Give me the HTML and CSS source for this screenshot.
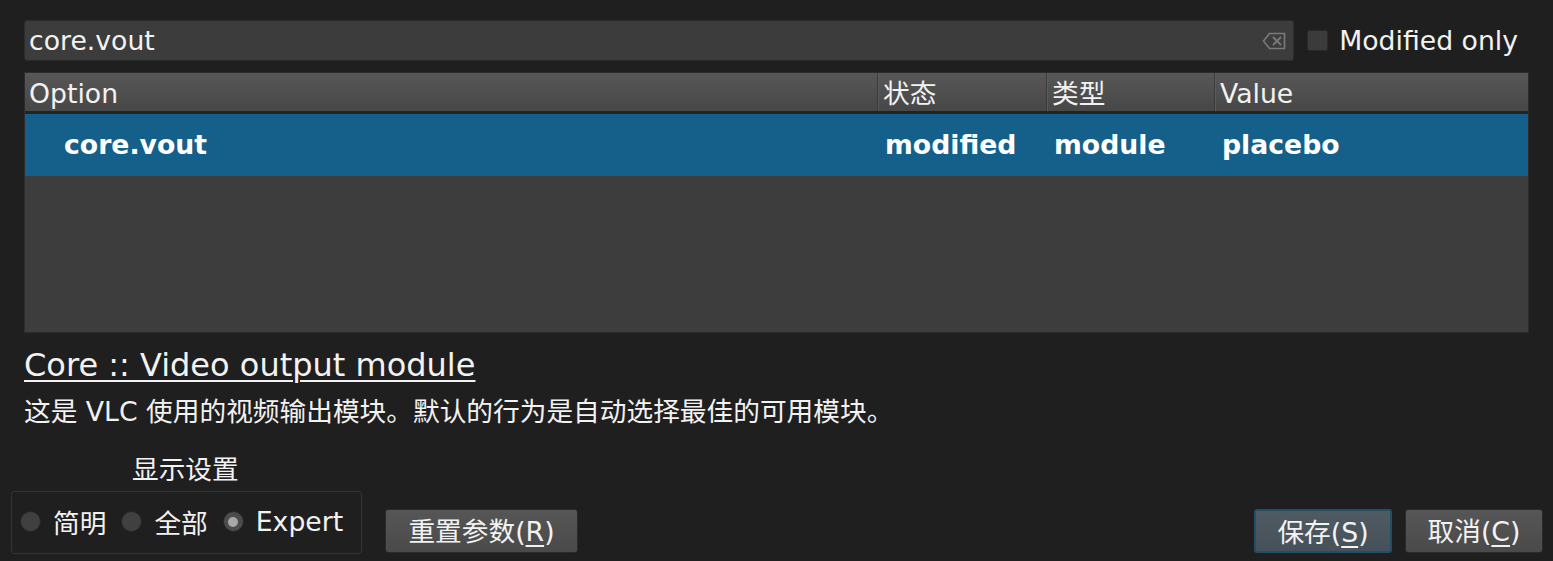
FILE: index.html
```html
<!DOCTYPE html>
<html lang="zh-CN">
<head>
    <meta charset="UTF-8">
    <title>高级设置</title>
    <link rel="stylesheet" href="styles.css">
</head>
<body>
<div class="dialog">
    <div class="search-row">
        <div class="search-box">
            <span class="search-text">core.vout</span>
            <svg class="clear-icon" width="24" height="18" viewBox="0 0 24 18">
                <path d="M7.5 1.5 H22.5 V16.5 H7.5 L1.5 9 Z" fill="none" stroke="#7a7a7a" stroke-width="1.6"/>
                <path d="M11 5 L19 13 M19 5 L11 13" stroke="#7a7a7a" stroke-width="1.8"/>
            </svg>
        </div>
        <label class="check">
            <span class="check-box"></span>
            <span>Modified only</span>
        </label>
    </div>

    <div class="table">
        <div class="table-head">
            <div class="col col-option">Option</div>
            <div class="col col-state">状态</div>
            <div class="col col-type">类型</div>
            <div class="col col-value">Value</div>
        </div>
        <div class="table-row selected">
            <div class="col col-option indent">core.vout</div>
            <div class="col col-state">modified</div>
            <div class="col col-type">module</div>
            <div class="col col-value">placebo</div>
        </div>
    </div>

    <div class="info">
        <div class="info-title">Core :: Video output module</div>
        <div class="info-desc">这是 VLC 使用的视频输出模块。默认的行为是自动选择最佳的可用模块。</div>
    </div>

    <div class="bottom">
        <div class="view-group">
            <div class="group-title">显示设置</div>
            <div class="group-box">
                <label class="radio"><span class="radio-dot"></span>简明</label>
                <label class="radio"><span class="radio-dot"></span>全部</label>
                <label class="radio"><span class="radio-dot checked"></span>Expert</label>
            </div>
        </div>
        <button class="btn btn-reset">重置参数(<u>R</u>)</button>
        <div class="spacer"></div>
        <button class="btn btn-save">保存(<u>S</u>)</button>
        <button class="btn btn-cancel">取消(<u>C</u>)</button>
    </div>
</div>
</body>
</html>
```

FILE: styles.css
```css
body {
    margin: 0;
    background: #201f1f;
    color: #f2f2f2;
    font: 26.7px "DejaVu Sans", "Noto Sans CJK SC", sans-serif;
}

.dialog {
    height: 561px;
    overflow: hidden;
}

/* search row */
.search-row {
    display: flex;
    align-items: center;
    padding: 20px 35px 0 24px;
    height: 41px;
}

.search-box {
    flex: 1;
    height: 41px;
    box-sizing: border-box;
    display: flex;
    align-items: center;
    padding: 0 7px 0 4px;
    background: #3c3c3c;
    border: 1px solid #2c2c2c;
    border-radius: 3px;
}

.search-text {
    flex: 1;
    line-height: 1;
    padding-top: 1px;
}

.clear-icon {
    display: block;
}

.check {
    display: flex;
    align-items: center;
    margin-left: 13px;
    gap: 11px;
}

.check-box {
    width: 19px;
    height: 19px;
    background: #3b3b3b;
    border: 1px solid #2a2a2a;
    border-radius: 2px;
}

/* table */
.table {
    margin: 11px 24px 0 24px;
    height: 261px;
    background: #3d3d3d;
    border: 1px solid #2c2c2c;
    box-sizing: border-box;
}

.table-head {
    display: flex;
    height: 38px;
    background: linear-gradient(#575757, #474747);
    border-bottom: 3px solid #232323;
}

.table-head .col {
    line-height: 42px;
    padding-left: 5px;
    border-left: 1px solid #3a3a3a;
    box-shadow: inset 1px 0 0 #5c5c5c;
}

.table-head .col-option {
    border-left: none;
    box-shadow: none;
    padding-left: 4px;
}

.col {
    box-sizing: border-box;
    white-space: nowrap;
}

.col-option { width: 852px; }
.col-state { width: 169px; }
.col-type { width: 168px; }
.col-value { flex: 1; }

.table-row {
    display: flex;
    height: 62px;
    align-items: center;
    font-weight: bold;
}

.table-row .col {
    padding-left: 8px;
    padding-bottom: 2px;
}

.table-row .indent {
    padding-left: 39px;
}

.selected {
    background: #14608a;
    color: #ffffff;
}

/* info text */
.info {
    padding: 12px 24px 0 24px;
}

.info-title {
    font-size: 32px;
    line-height: 40px;
    text-decoration: underline;
    text-decoration-thickness: 2px;
    text-underline-offset: 4px;
}

.info-desc {
    margin-top: 10px;
    line-height: 34px;
}

/* bottom bar */
.bottom {
    display: flex;
    align-items: flex-end;
    padding: 0 10px 0 11px;
    margin-top: 24px;
}

.view-group {
    display: flex;
    flex-direction: column;
}

.group-title {
    padding-left: 121px;
    line-height: 34px;
    margin-bottom: 4px;
}

.group-box {
    display: flex;
    align-items: center;
    width: 351px;
    height: 63px;
    box-sizing: border-box;
    padding: 0 8px 2px 8px;
    gap: 15px;
    border: 1px solid #353434;
    border-radius: 3px;
}

.radio {
    display: flex;
    align-items: center;
    gap: 12px;
}

.radio-dot {
    width: 21px;
    height: 21px;
    box-sizing: border-box;
    border-radius: 50%;
    background: #404040;
    border: 1px solid #262626;
    display: flex;
    align-items: center;
    justify-content: center;
}

.radio-dot.checked {
    background: #4c4c4c;
}

.radio-dot.checked::after {
    content: "";
    width: 10px;
    height: 10px;
    border-radius: 50%;
    background: #a8a8a8;
}

.btn {
    height: 44px;
    margin-bottom: 1px;
    padding: 0 0 4px 0;
    white-space: nowrap;
    font: inherit;
    color: #f2f2f2;
    background: linear-gradient(#565656, #4a4a4a);
    border: 1px solid #2a2a2a;
    border-radius: 3px;
}

.btn u {
    text-underline-offset: 4px;
}

.btn-reset {
    width: 193px;
    margin-left: 23px;
}

.spacer {
    flex: 1;
}

.btn-save {
    width: 138px;
    margin-right: 13px;
    background: linear-gradient(#505a62, #46515a);
    border: 2px solid #1f4f6a;
}

.btn-cancel {
    width: 138px;
}
```
